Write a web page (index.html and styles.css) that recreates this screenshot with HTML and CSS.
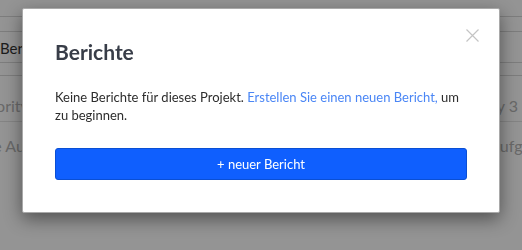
FILE: index.html
```html
<!DOCTYPE html>
<html lang="de">
<head>
<meta charset="utf-8">
<link rel="stylesheet" href="styles.css">
</head>
<body>
<div class="page">
  <div class="header">
    <div class="tab">Berichte</div>
  </div>
  <div class="row"><span class="cell left">Priority</span><span class="cell right">Priority 3</span></div>
  <div class="row last"><span class="cell left">Neue Aufgabe</span><span class="cell right">Aufgabe</span></div>
</div>
<div class="backdrop"></div>
<div class="modal">
  <div class="modal-header">
    <h2 class="title">Berichte</h2>
    <span class="close" aria-label="Schließen">
      <svg width="13" height="13" viewBox="0 0 13 13"><path d="M0.5 0.5 L12.5 12.5 M12.5 0.5 L0.5 12.5" stroke="#c4c4c4" stroke-width="1.2" fill="none"/></svg>
    </span>
  </div>
  <p class="text">Keine Berichte für dieses Projekt. <a class="link" href="#">Erstellen Sie einen neuen Bericht,</a> um zu beginnen.</p>
  <button class="btn">+ neuer Bericht</button>
</div>
</body>
</html>
```
FILE: styles.css
```css
html, body {
  margin: 0;
  padding: 0;
  width: 522px;
  height: 250px;
  overflow: hidden;
  font-family: Lato, "Open Sans", sans-serif;
  background: #fff;
}
.page {
  padding-top: 16px;
}
.header {
  border-top: 1px solid #d8d8d8;
  border-bottom: 1px solid #d8d8d8;
  height: 60px;
  padding-top: 14px;
  box-sizing: border-box;
}
.tab {
  border-top: 1px solid #d8d8d8;
  border-bottom: 1px solid #d8d8d8;
  height: 32px;
  line-height: 32px;
  font-size: 15px;
  color: #333;
  margin-left: 0;
  box-sizing: border-box;
}
.row {
  display: flex;
  justify-content: space-between;
  height: 45px;
  line-height: 60px;
  border-bottom: 1px solid #e4e4e4;
  font-size: 16px;
  color: #b5b5b5;
}
.row.last {
  border-bottom: none;
  line-height: 48px;
}
.cell.left { margin-left: -23px; }
.row.last .cell.left { margin-left: -36px; }
.cell.right { margin-right: 4px; }
.row.last .cell.right { margin-right: -26px; }
.backdrop {
  position: fixed;
  inset: 0;
  background: rgba(0, 0, 0, 0.42);
}
.modal {
  position: absolute;
  left: 22px;
  top: 8px;
  width: 478px;
  box-sizing: border-box;
  background: #fff;
  border: 1px solid #a9a9a9;
  border-radius: 2px;
  box-shadow: 0 6px 18px rgba(0, 0, 0, 0.45);
  padding: 32px;
}
.modal-header {
  display: flex;
  justify-content: space-between;
  align-items: flex-start;
}
.title {
  margin: 0;
  font-size: 21px;
  line-height: 22px;
  font-weight: 700;
  color: #383d48;
}
.close {
  display: block;
  margin-top: -12px;
  margin-right: -12px;
  height: 13px;
}
.close svg { display: block; }
.text {
  margin: 25px 0 0;
  font-size: 13px;
  line-height: 18px;
  color: #2d2d2d;
}
.link {
  color: #4a86f5;
  text-decoration: none;
}
.btn {
  display: block;
  width: 100%;
  margin-top: 24px;
  height: 32px;
  background: #0f5ffe;
  border: 1px solid #0a4fd4;
  border-radius: 3px;
  color: #fff;
  font-family: Lato, "Open Sans", sans-serif;
  font-size: 13px;
  padding: 0;
}
```
